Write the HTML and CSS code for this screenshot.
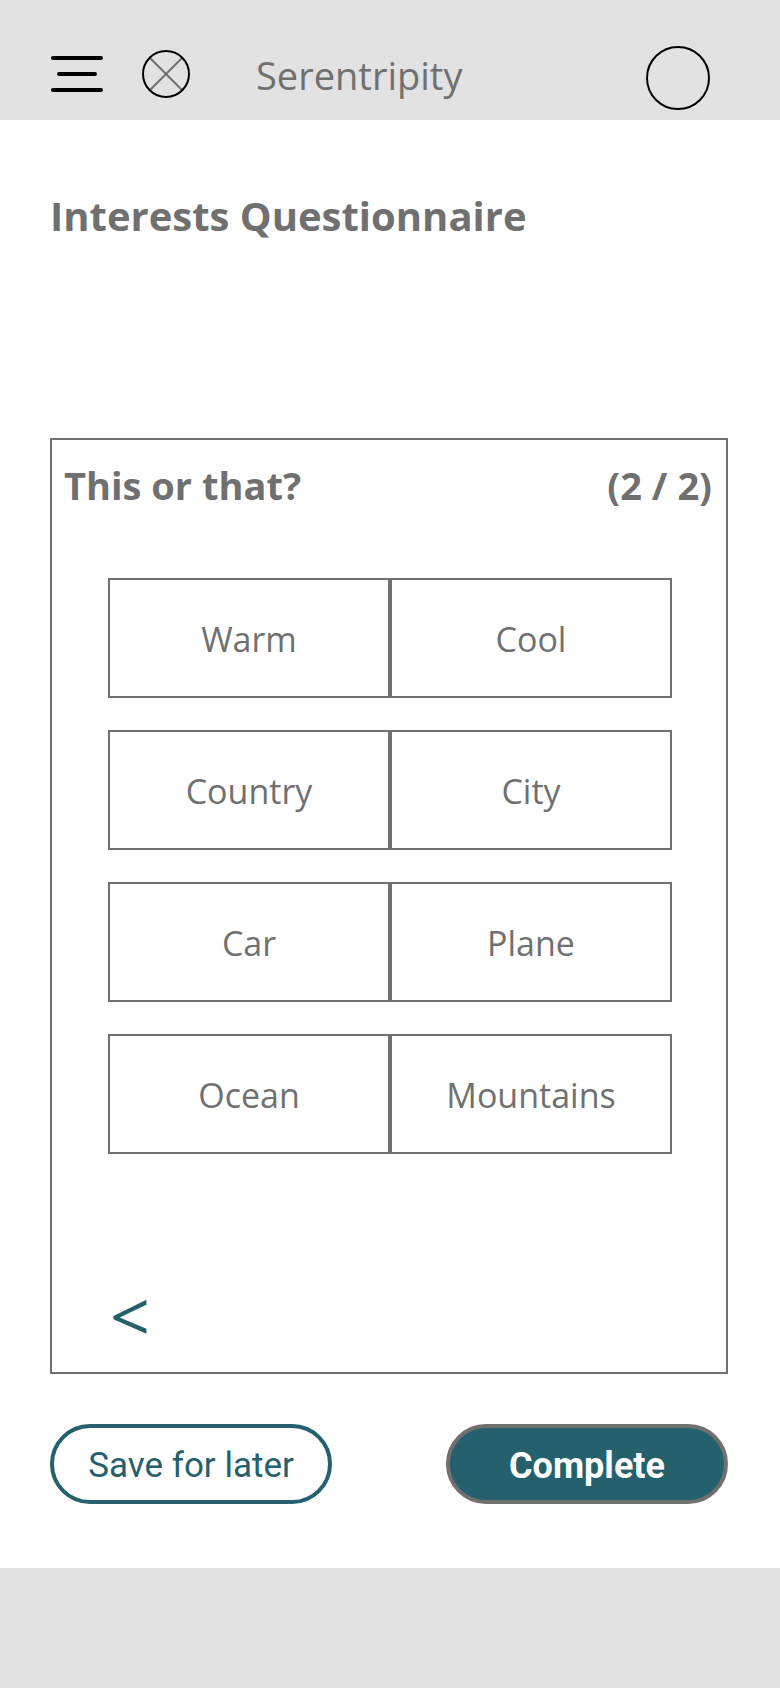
FILE: index.html
```html
<!DOCTYPE html>
<html lang="en">
<head>
<meta charset="utf-8">
<meta name="viewport" content="width=device-width, initial-scale=1">
<title>Serentripity</title>
<link rel="stylesheet" href="styles.css">
</head>
<body>
<header class="topbar">
  <div class="topbar-start">
    <button class="icon-button" type="button" aria-label="Menu">
      <svg width="54" height="48" viewBox="0 0 54 48" fill="none" stroke="#000" stroke-width="4" stroke-linecap="round"><path d="M3 8H51M9 24H45M3 40H51"/></svg>
    </button>
    <a class="brand" href="#">
      <svg width="48" height="48" viewBox="0 0 48 48" fill="none" stroke-width="2" aria-hidden="true"><path d="M8 8L40 40M40 8L8 40" stroke="#707070"/><circle cx="24" cy="24" r="23" stroke="#000"/></svg>
      <span class="brand-name">Serentripity</span>
    </a>
  </div>
  <button class="profile" type="button" aria-label="Profile"></button>
</header>
<main class="content">
  <h1 class="page-title">Interests Questionnaire</h1>
  <section class="panel">
    <div class="panel-head">
      <h2 class="panel-title">This or that?</h2>
      <span class="panel-title">(2 / 2)</span>
    </div>
    <div class="questions">
      <div class="pair"><button class="choice" type="button">Warm</button><button class="choice" type="button">Cool</button></div>
      <div class="pair"><button class="choice" type="button">Country</button><button class="choice" type="button">City</button></div>
      <div class="pair"><button class="choice" type="button">Car</button><button class="choice" type="button">Plane</button></div>
      <div class="pair"><button class="choice" type="button">Ocean</button><button class="choice" type="button">Mountains</button></div>
    </div>
    <button class="back" type="button" title="Previous">&lt;</button>
  </section>
  <div class="actions">
    <button class="action" type="button">Save for later</button>
    <button class="action action-primary" type="button">Complete</button>
  </div>
</main>
<footer class="bottombar"></footer>
</body>
</html>
```
FILE: styles.css
```css
* { box-sizing: border-box; }

body {
  display: flex;
  flex-direction: column;
  min-height: 100vh;
  margin: 0;
  background: #fff;
  color: #707070;
  font-family: "Open Sans", "Noto Sans", sans-serif;
}

button {
  margin: 0;
  padding: 0;
  border: 0;
  background: none;
  color: inherit;
  font: inherit;
  cursor: pointer;
}

svg { display: block; }

.topbar {
  display: flex;
  justify-content: space-between;
  align-items: flex-start;
  padding: 46px 70px 10px 50px;
  background: #e2e2e2;
}

.topbar-start {
  display: flex;
  align-items: flex-start;
  gap: 38px;
  padding-top: 4px;
}

.brand {
  display: flex;
  align-items: flex-start;
  gap: 66px;
  color: inherit;
  font-size: 38px;
  line-height: 50px;
  text-decoration: none;
}

.profile {
  width: 64px;
  height: 64px;
  border: 2px solid #000;
  border-radius: 50%;
}

.content {
  flex: 1;
  padding: 68px 52px 64px 50px;
}

.page-title {
  margin: 0 0 194px;
  font-size: 40px;
  line-height: 56px;
  font-weight: 700;
}

.panel {
  padding: 18px 14px 22px 12px;
  border: 2px solid #707070;
}

.panel-head {
  display: flex;
  justify-content: space-between;
}

.panel-title {
  margin: 0;
  font-size: 38px;
  line-height: 54px;
  font-weight: 700;
}

.questions {
  display: grid;
  gap: 32px;
  padding: 66px 40px 0 44px;
}

.pair {
  display: grid;
  grid-template-columns: 1fr 1fr;
}

.choice {
  min-height: 120px;
  padding-top: 2px;
  border: 2px solid #707070;
  font-size: 34px;
  line-height: 48px;
}

.back {
  display: block;
  margin: 126px 0 0 46px;
  color: #25606d;
  font-size: 70px;
  font-weight: 500;
  line-height: 70px;
}

.actions {
  display: flex;
  justify-content: space-between;
  gap: 24px;
  padding-top: 50px;
}

.action {
  flex: 0 1 282px;
  min-height: 80px;
  padding-top: 4px;
  border: 4px solid #25606d;
  border-radius: 40px;
  color: #25606d;
  font-family: Roboto, sans-serif;
  font-size: 35px;
  line-height: 40px;
}

.action-primary {
  border-color: #707070;
  background: #25606d;
  color: #fff;
  font-size: 36px;
  font-weight: 700;
}

.bottombar {
  min-height: 120px;
  background: #e2e2e2;
}
```
